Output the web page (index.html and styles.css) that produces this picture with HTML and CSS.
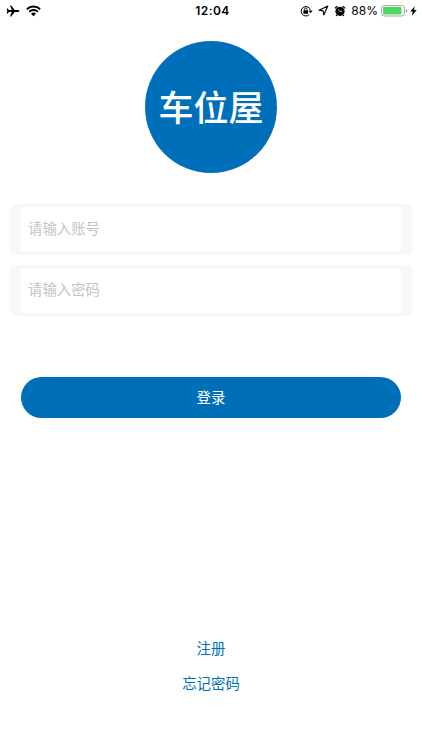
FILE: index.html
```
<!DOCTYPE html>
<html lang="zh-CN">
<head>
    <meta charset="UTF-8">
    <meta name="viewport" content="width=device-width, initial-scale=1.0">
    <title>车位屋</title>
    <link rel="stylesheet" href="styles.css">
</head>
<body>
    <div class="status-bar">
        <div class="status-left">
            <svg width="14" height="12" viewBox="0 0 14 12">
                <path d="M13.4 6c0-.6-.7-.9-1.5-.9H8.7L5.2.4H4l1.8 4.7H2.9L1.6 3.4H.6L1.3 6 .6 8.6h1l1.3-1.7h2.9L4 11.6h1.2l3.5-4.7h3.2c.8 0 1.5-.3 1.5-.9z"/>
            </svg>
            <svg width="15" height="12" viewBox="0 0 15 12">
                <path d="M.9 4.300a9.400 9.400 0 0 1 13.200 0M3.200 6.700a6.200 6.200 0 0 1 8.600 0" fill="none" stroke="#000" stroke-width="2"/>
                <path d="M7.500 11.300 5 8.700a3.600 3.600 0 0 1 5 0z"/>
            </svg>
        </div>
        <div class="status-time">12:04</div>
        <div class="status-right">
            <svg class="lock" width="13" height="12" viewBox="0 0 13 12">
                <path d="M9.1 9.7A4.7 4.7 0 1 1 10.4 5" fill="none" stroke="#000" stroke-width="1"/>
                <path d="M8.4 5.5h4.2l-2.1 2.7z"/>
                <rect x="3.4" y="5.3" width="4.6" height="3.4" rx=".4"/>
                <path d="M4.4 5.5V4.3a1.3 1.3 0 0 1 2.6 0v1.2" fill="none" stroke="#000" stroke-width=".9"/>
            </svg>
            <svg class="location" width="11" height="11" viewBox="0 0 11 11">
                <path d="M9.8 1.1 1 5.2l4.1.7.7 4z" fill="none" stroke="#000" stroke-width="1.1" stroke-linejoin="round"/>
            </svg>
            <svg class="alarm" width="12" height="12" viewBox="0 0 12 12">
                <circle cx="6" cy="6.3" r="4.6"/>
                <path d="M1 3.300A9 9 0 0 1 3.300 1.200M11 3.300a9 9 0 0 0-2.300-2.100M3 9.800l-.8 1.200M9 9.800l.8 1.200" fill="none" stroke="#000" stroke-width="1.300"/>
                <path d="M4 4.500 6 6.300h2.200" fill="none" stroke="#fff" stroke-width=".8"/>
            </svg>
            <span class="percent">88%</span>
            <svg class="battery" width="27" height="12" viewBox="0 0 27 12">
                <rect x=".5" y=".6" width="23" height="10.4" rx="2.6" fill="#fff" stroke="#9b9b9b" stroke-width=".9"/>
                <rect x="2" y="2" width="18.5" height="7.6" rx="1.1" fill="#4cd964"/>
                <path d="M24.9 4v3.8c.9-.3 1.3-1 1.3-1.9S25.800 4.300 24.900 4z" fill="#9b9b9b"/>
            </svg>
            <svg class="bolt" width="7" height="10" viewBox="0 0 7 10">
                <path d="M4.700 .2.3 5.600h2.400L2 9.800l4.700-5.700H4.100z"/>
            </svg>
        </div>
    </div>

    <div class="logo">车位屋</div>

    <form class="login-form">
        <div class="field">
            <input type="text" name="account" placeholder="请输入账号">
        </div>
        <div class="field">
            <input type="password" name="password" placeholder="请输入密码">
        </div>
        <button type="submit" class="login-btn">登录</button>
    </form>

    <div class="links">
        <a class="link">注册</a>
        <a class="link">忘记密码</a>
    </div>
</body>
</html>
```
FILE: styles.css
```
* {
    box-sizing: border-box;
}
body {
    margin: 0;
    height: 750px;
    display: flex;
    flex-direction: column;
    background: #fff;
    font-family: "Noto Sans CJK SC", sans-serif;
    overflow: hidden;
}
.status-bar {
    display: grid;
    grid-template-columns: 1fr auto 1fr;
    align-items: center;
    height: 22px;
    padding: 0 5px 1px 6px;
    font-family: Inter, "Liberation Sans", sans-serif;
    font-size: 12px;
    color: #000;
}
.status-bar svg {
    display: block;
    flex: none;
}
.status-left {
    display: flex;
    align-items: center;
    gap: 6px;
}
.status-time {
    padding-left: 2px;
    font-weight: 600;
    letter-spacing: 0.4px;
}
.status-right {
    display: flex;
    align-items: center;
    justify-content: flex-end;
}
.location {
    margin-left: 5px;
}
.alarm {
    margin-left: 5px;
}
.percent {
    margin-left: 5px;
}
.battery {
    margin-left: 3px;
}
.bolt {
    margin-left: 2px;
}
.logo {
    width: 132px;
    height: 132px;
    margin: 19px auto 0;
    border-radius: 50%;
    background: #006fb9;
    color: #fff;
    font-size: 35px;
    font-weight: 500;
    line-height: 130px;
    text-align: center;
}
.login-form {
    margin: 31px 10px 0;
}
.field {
    height: 51px;
    margin-bottom: 10px;
    padding: 3px 11px;
    border-radius: 4px;
    background: #f8f8f8;
}
.field input {
    display: block;
    width: 100%;
    height: 45px;
    padding: 0 7px 4px;
    border: none;
    border-radius: 4px;
    background: #fff;
    font-family: inherit;
    font-size: 14.4px;
    outline: none;
}
.field input::placeholder {
    color: #c3c3ca;
    opacity: 1;
}
.login-btn {
    display: block;
    width: 380px;
    height: 41px;
    margin: 61px auto 0;
    padding: 0 0 2px;
    border: none;
    border-radius: 21px;
    background: #006fb9;
    color: #fff;
    font-family: inherit;
    font-size: 14.4px;
}
.links {
    display: flex;
    flex-direction: column;
    align-items: center;
    gap: 14px;
    margin-top: auto;
    padding-bottom: 57px;
}
.link {
    color: #006fb9;
    font-size: 14.4px;
    line-height: 21px;
}
```
